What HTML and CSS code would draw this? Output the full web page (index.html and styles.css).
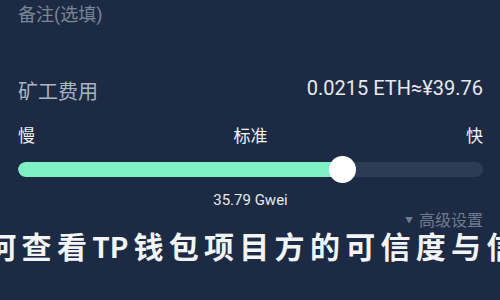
FILE: index.html
```html
<!DOCTYPE html>
<html lang="zh-CN">
<head>
<meta charset="utf-8">
<link rel="stylesheet" href="styles.css">
</head>
<body>
<div class="page">
  <div class="note">备注(选填)</div>
  <div class="fee-row">
    <span class="fee-label">矿工费用</span>
    <span class="fee-value">0.0215 ETH≈¥39.76</span>
  </div>
  <div class="speeds">
    <span>慢</span>
    <span>标准</span>
    <span>快</span>
  </div>
  <div class="slider">
    <div class="track">
      <div class="fill" style="width: 69.7%"></div>
    </div>
    <div class="thumb" style="left: 69.7%"></div>
  </div>
  <div class="gwei">35.79 Gwei</div>
  <div class="advanced"><span class="caret">▼</span>高级设置</div>
  <div class="title">如何查看<span class="latin">TP</span>钱包项目方的可信度与信誉</div>
</div>
</body>
</html>
```
FILE: styles.css
```css
html, body {
  margin: 0;
  padding: 0;
  background: #1c2b43;
  width: 500px;
  height: 300px;
  overflow: hidden;
}
.page {
  position: relative;
  height: 300px;
  padding: 0 17px 0 18px;
  font-family: Roboto, "Noto Sans CJK SC", sans-serif;
  color: #e8ebf0;
}
.note {
  padding-top: 4px;
  font-size: 18px;
  line-height: 22px;
  color: #7a8597;
}
.fee-row {
  margin-top: 54px;
  display: flex;
  justify-content: space-between;
  align-items: flex-start;
  height: 24px;
}
.fee-label {
  font-size: 20px;
  line-height: 24px;
  color: #aab3c1;
}
.fee-value {
  font-size: 20px;
  line-height: 16px;
  color: #e6e9ee;
}
.speeds {
  margin-top: 22px;
  display: flex;
  justify-content: space-between;
  font-size: 17px;
  line-height: 20px;
  color: #f0f2f5;
}
.slider {
  position: relative;
  margin-top: 10px;
  height: 27px;
  display: flex;
  align-items: center;
}
.track {
  flex: 1;
  height: 15px;
  border-radius: 8px;
  background: #2e3b55;
  overflow: hidden;
}
.fill {
  height: 100%;
  background: #7ef0c4;
  border-radius: 8px 0 0 8px;
}
.thumb {
  position: absolute;
  top: 0;
  width: 27px;
  height: 27px;
  margin-left: -13px;
  border-radius: 50%;
  background: #ffffff;
}
.gwei {
  margin-top: 8px;
  text-align: center;
  font-size: 15px;
  line-height: 18px;
  color: #e6e9ee;
}
.advanced {
  margin-top: 2px;
  text-align: right;
  font-size: 16px;
  line-height: 20px;
  color: #6f7a8d;
}
.caret {
  font-size: 8px;
  margin-right: 6px;
  vertical-align: 3px;
}
.title {
  position: absolute;
  left: -49px;
  top: 225px;
  white-space: nowrap;
  font-family: "Noto Sans CJK SC", sans-serif;
  font-weight: 700;
  font-size: 30px;
  line-height: 40px;
  letter-spacing: 5.3px;
  color: #f2f4f6;
}
.latin {
  font-size: 28px;
  letter-spacing: 0;
  margin-right: 5px;
}
```
